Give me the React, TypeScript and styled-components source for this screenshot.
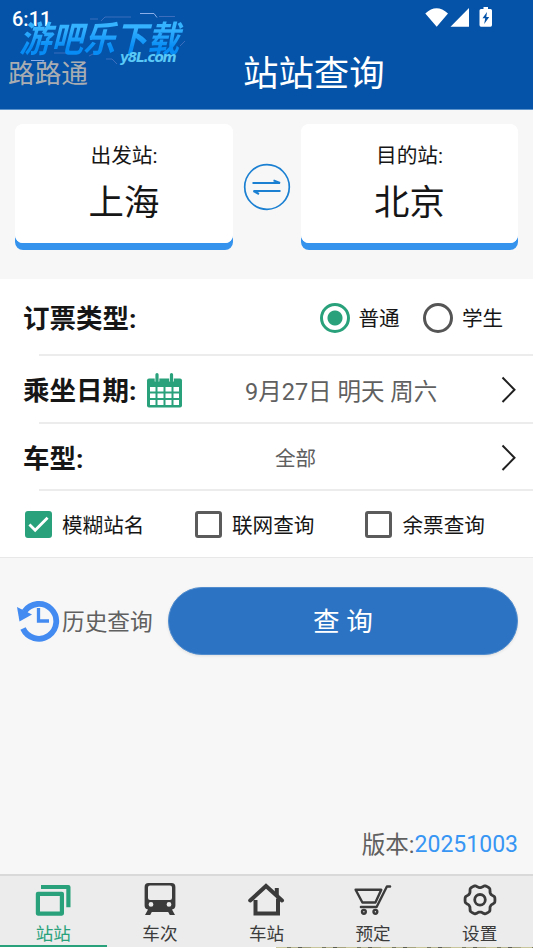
import React from 'react';
import styled, { createGlobalStyle } from 'styled-components';

const GlobalStyle = createGlobalStyle`
  * { box-sizing: border-box; }
  body { margin: 0; background: #f7f7f7; font-family: Roboto, "Noto Sans CJK SC", sans-serif; overflow: hidden; }
  button { font-family: inherit; border: 0; padding: 0; background: none; }
`;

const Screen = styled.div`
  width: 533px;
  height: 948px;
  display: flex;
  flex-direction: column;
  overflow: hidden;
  background: #f7f7f7;
  color: #161616;
`;

const Header = styled.header`
  position: relative;
  height: 110px;
  flex: none;
  background: #0453a8;
  border-bottom: 1px solid #5e94cc;
  color: #fff;
`;

const StatusBar = styled.div`
  display: flex;
  justify-content: space-between;
  height: 36px;
  padding: 7px 40px 0 12px;
`;

const Clock = styled.span`
  font-size: 20px;
  font-weight: 500;
  line-height: 24px;
`;

const StatusIcons = styled.svg`
  width: 70px;
  height: 22px;
`;

const TitleBar = styled.div`
  display: grid;
  grid-template-columns: 232px 1fr;
  height: 73px;
  padding-left: 8px;
`;

const AppName = styled.span`
  font-size: 26.7px;
  line-height: 38px;
  padding-top: 19px;
  color: #a9adb2;
`;

const Title = styled.h1`
  margin: 0;
  padding: 13px 0 0 3px;
  font-size: 35.4px;
  line-height: 50px;
  font-weight: 400;
`;

const Watermark = styled.div`
  position: absolute;
  left: 14px;
  top: 8px;
  width: 174px;
  height: 60px;
`;

const Decoration = styled.svg`
  position: absolute;
  inset: 0;
`;

const Brand = styled.div`
  position: absolute;
  left: 8px;
  top: 10px;
  font-size: 32px;
  line-height: 44px;
  font-weight: 700;
  white-space: nowrap;
  transform: skewX(-14deg) scaleY(1.12);
  background: linear-gradient(#36b3ff 25%, #078cf5 65%);
  background-clip: text;
  color: transparent;
`;

const BrandSite = styled.div`
  position: absolute;
  left: 106px;
  top: 40px;
  font: italic 700 13.5px/18px "DejaVu Sans", sans-serif;
  letter-spacing: -1.1px;
  color: #5ac9f7;
`;

const Stations = styled.section`
  display: grid;
  grid-template-columns: 218px 68px 217px;
  height: 169px;
  flex: none;
  padding: 14px 15px 30px;
`;

const StationCard = styled.button`
  display: flex;
  flex-direction: column;
  align-items: center;
  height: 126px;
  border-radius: 8px;
  background: #fff;
  box-shadow: inset 0 -7px 0 #3693ed;
  overflow: hidden;
  color: #161616;
`;

const StationFace = styled.span`
  display: flex;
  flex-direction: column;
  align-items: center;
  width: 100%;
  height: 119px;
  border-radius: 8px;
  background: #fff;
`;

const StationLabel = styled.span`
  font-size: 20.7px;
  line-height: 30px;
  margin-top: 17px;
`;

const StationName = styled.span`
  font-size: 35.4px;
  line-height: 50px;
  margin-top: 7px;
`;

const SwapButton = styled.button`
  display: flex;
  justify-content: center;
  padding-top: 39px;
`;

const FormPanel = styled.section`
  height: 279px;
  flex: none;
  background: #fff;
  border-bottom: 1px solid #e8e8e8;
`;

const Row = styled.div<{ $height: number }>`
  display: flex;
  align-items: center;
  height: ${(p) => p.$height}px;
  padding-left: 23px;
  background: linear-gradient(#ececec, #ececec) 38.5px 100% / 100% 2px no-repeat;
`;

const RowLabel = styled.span<{ $width: number }>`
  width: ${(p) => p.$width}px;
  padding-top: 2px;
  font-size: 26.5px;
  line-height: 38px;
  font-weight: 700;
  white-space: nowrap;
`;

const RowValue = styled.span<{ $size: number; $indent: number }>`
  flex: 1;
  padding: 3px 0 0 ${(p) => p.$indent}px;
  font-size: ${(p) => p.$size}px;
  line-height: 34px;
  color: #606060;
  white-space: nowrap;
`;

const Chevron = styled.svg`
  width: 18px;
  height: 28px;
  margin-right: 15.5px;
  flex: none;
`;

const RadioOption = styled.label<{ $width: number }>`
  display: flex;
  align-items: center;
  gap: 9px;
  width: ${(p) => p.$width}px;
  font-size: 20.6px;
  line-height: 30px;
  white-space: nowrap;
`;

const OptionText = styled.span`
  padding-top: 3px;
`;

const RadioMark = styled.span<{ $on?: boolean }>`
  width: 30px;
  height: 30px;
  flex: none;
  border: 3px solid ${(p) => (p.$on ? '#29a17b' : '#555')};
  border-radius: 50%;
  background: ${(p) => (p.$on ? 'radial-gradient(circle, #29a17b 7px, transparent 8px)' : 'none')};
`;

const Checks = styled.div`
  display: grid;
  grid-template-columns: 170px 170.5px 1fr;
  align-items: center;
  height: 66px;
  padding: 1px 0 0 24.5px;
`;

const CheckOption = styled.label`
  display: flex;
  align-items: center;
  gap: 10.5px;
  font-size: 20.6px;
  line-height: 30px;
  white-space: nowrap;
`;

const CheckMark = styled.span<{ $on?: boolean }>`
  display: flex;
  width: 27px;
  height: 27px;
  flex: none;
  border: 3px solid ${(p) => (p.$on ? '#29a17b' : '#5b5b5b')};
  border-radius: 3px;
  background: ${(p) => (p.$on ? '#29a17b' : 'transparent')};
`;

const Actions = styled.section`
  display: flex;
  align-items: center;
  height: 128px;
  flex: none;
  padding: 0 15px 2px 16px;
`;

const HistoryButton = styled.button`
  display: flex;
  align-items: center;
  width: 152px;
  gap: 2px;
  font-size: 22.7px;
  line-height: 34px;
  white-space: nowrap;
  color: #606060;
`;

const HistoryText = styled.span`
  padding-top: 4px;
`;

const QueryButton = styled.button`
  width: 350px;
  height: 68px;
  padding-top: 2px;
  border-radius: 34px;
  background: #2c73c3;
  border: 1px solid #518dce;
  box-shadow: 0 1px 3px rgba(0, 0, 0, 0.1);
  color: #fff;
  font-size: 26.6px;
  line-height: 38px;
`;

const Version = styled.div`
  flex: 1;
  display: flex;
  align-items: flex-end;
  justify-content: flex-end;
  padding: 0 15px 11px 0;
  font-size: 23.6px;
  line-height: 36px;
  color: #606060;
`;

const VersionNumber = styled.span`
  font-size: 23px;
  color: #3795f4;
`;

const NavBar = styled.nav`
  display: grid;
  grid-template-columns: repeat(5, 1fr);
  height: 73px;
  flex: none;
  border-top: 2px solid #d9d9d9;
  background: #ececec;
`;

const NavItem = styled.button<{ $active?: boolean }>`
  display: flex;
  flex-direction: column;
  align-items: center;
  padding-top: 5px;
  box-shadow: ${(p) => (p.$active ? 'inset 0 -2px 0 #29a17b' : 'none')};
  color: ${(p) => (p.$active ? '#29a17b' : '#3b3b3b')};
  font-size: 17.6px;
  line-height: 26px;
`;

const NavIcon = styled.svg`
  width: 40px;
  height: 38px;
  flex: none;
`;

const NavText = styled.span`
  margin-top: 2px;
`;

const BottomEdge = styled.div`
  display: grid;
  grid-template-columns: 107px 169px 1fr;
  height: 1px;
  flex: none;
`;

const EdgePlain = styled.span`
  background: #fff;
`;

const EdgeTextured = styled.span`
  background: repeating-linear-gradient(
    90deg,
    #c9c69c 0 11px,
    #77775e 11px 15px,
    #b9b790 15px 22px,
    #5d5e4d 22px 26px,
    #a5a47f 26px 35px
  );
`;

const gearPath =
  Array.from({ length: 120 }, (_, i) => {
    const angle = (i / 120) * Math.PI * 2;
    const wave = Math.max(-1, Math.min(1, 1.5 * Math.cos(6 * angle) + 0.35));
    const radius = 13.6 + 1.35 * wave;
    const x = 20 + radius * Math.cos(angle);
    const y = 18.8 + radius * Math.sin(angle);
    return `${i ? 'L' : 'M'}${x.toFixed(2)} ${y.toFixed(2)}`;
  }).join('') + 'Z';

const navItems: { label: string; icon: React.ReactNode }[] = [
  {
    label: '站站',
    icon: (
      <g fill="none" stroke="currentColor" strokeWidth="4.2" strokeLinejoin="round">
        <rect x="4.9" y="12.8" width="24" height="19.8" />
        <path d="M8 6H35.400V26.200" />
      </g>
    ),
  },
  {
    label: '车次',
    icon: (
      <path
        fill="currentColor"
        fillRule="evenodd"
        d="M8.5 2h23a4 4 0 0 1 3.900 4v18.500a4 4 0 0 1-3.400 4L35 34h-5.200l-1.600-3H11.800l-1.600 3H5l3-5.500a4 4 0 0 1-3.400-4V6a4 4 0 0 1 3.900-4ZM10 4.500a2 2 0 0 0-2 2V17a2 2 0 0 0 2 2h20a2 2 0 0 0 2-2V6.500a2 2 0 0 0-2-2ZM11 21a2.400 2.400 0 1 0 0 4.800 2.400 2.400 0 0 0 0-4.800Zm18 0a2.400 2.400 0 1 0 0 4.800 2.400 2.400 0 0 0 0-4.800Z"
      />
    ),
  },
  {
    label: '车站',
    icon: (
      <g fill="none" stroke="currentColor" strokeWidth="4">
        <path d="M4.200 19.500 20 5 36 19.500" strokeLinecap="round" />
        <path d="M9.500 19V32.500h22.500V17.500" />
        <path d="M30.800 7v8" />
      </g>
    ),
  },
  {
    label: '预定',
    icon: (
      <g
        fill="none"
        stroke="currentColor"
        strokeWidth="2.4"
        strokeLinejoin="round"
        strokeLinecap="round"
        transform="translate(-1.900 1)"
      >
        <path d="M39 4.500h-3.200L25.500 25H9.800M30.200 7.800H4.500L11.300 20.500H24.300Z" />
        <circle cx="12.800" cy="29.800" r="1.900" />
        <circle cx="24.300" cy="29.800" r="1.900" />
      </g>
    ),
  },
  {
    label: '设置',
    icon: (
      <g fill="none" stroke="currentColor" strokeWidth="2.800" strokeLinejoin="round">
        <path d={gearPath} />
        <circle cx="20" cy="18.800" r="5.300" />
      </g>
    ),
  },
];

function ArrowRight() {
  return (
    <Chevron viewBox="0 0 18 28">
      <path d="M2.500 1.500 14.500 13.700 2.500 26" fill="none" stroke="#202020" strokeWidth="2" />
    </Chevron>
  );
}

function Station({ label, name }: { label: string; name: string }) {
  return (
    <StationCard>
      <StationFace>
        <StationLabel>{label}</StationLabel>
        <StationName>{name}</StationName>
      </StationFace>
    </StationCard>
  );
}

export default function App() {
  return (
    <Screen>
      <GlobalStyle />
      <Header>
        <StatusBar>
          <Clock>6:11</Clock>
          <StatusIcons viewBox="0 0 70 22" fill="#fff">
            <path d="M2.300 6.500Q13.500-4 25 6.500L13.700 19.700ZM27.500 19.700 46 1V19.700Z" />
            <path
              fillRule="evenodd"
              d="M60.500 0h4.500v2h2.500q1.500 0 1.500 1.500V18q0 1.700-1.500 1.700h-9.500q-1.500 0-1.500-1.700V3.500Q56.500 2 58 2h2.500ZM64 5l-4.500 6.300h2.700L61.200 17l5-7h-2.900Z"
            />
          </StatusIcons>
        </StatusBar>
        <TitleBar>
          <AppName>路路通</AppName>
          <Title>站站查询</Title>
        </TitleBar>
        <Watermark>
          <Decoration viewBox="0 0 174 60" fill="none">
            <path d="M126 5.500h14l3 4M17 52.500h13l-4 4" stroke="#8baee8" />
            <path
              d="M87 13l4-4h26M145 8.500h16M76 11h8M40 45h12M92 51h6l5 5M166 38l5-5M75 48l8-4"
              stroke="#5679c5"
              strokeWidth=".7"
            />
          </Decoration>
          <Brand>游吧乐下载</Brand>
          <BrandSite>y8L.com</BrandSite>
        </Watermark>
      </Header>

      <Stations>
        <Station label="出发站:" name="上海" />
        <SwapButton aria-label="交换">
          <svg width="48" height="48" viewBox="0 0 48 48" fill="none" stroke="#1b80d2">
            <circle cx="24" cy="24" r="22.300" strokeWidth="1.700" />
            <path d="M9.500 20H37L30.500 17.300M37.500 28H10.500L16 31" strokeWidth="2" />
          </svg>
        </SwapButton>
        <Station label="目的站:" name="北京" />
      </Stations>

      <FormPanel>
        <Row $height={77}>
          <RowLabel $width={296.5}>订票类型:</RowLabel>
          <RadioOption $width={103.5}>
            <RadioMark $on />
            <OptionText>普通</OptionText>
          </RadioOption>
          <RadioOption $width={90}>
            <RadioMark />
            <OptionText>学生</OptionText>
          </RadioOption>
        </Row>
        <Row $height={68}>
          <RowLabel $width={123}>乘坐日期:</RowLabel>
          <svg width="37" height="36" viewBox="0 0 37 36">
            <rect x="1" y="6.500" width="35" height="29" rx="2" fill="#29a17b" />
            <path d="M11 1v8.500M25.500 1v8.500" stroke="#fff" strokeWidth="4.600" />
            <path d="M11 2.500v6.500M25.500 2.500v6.500" stroke="#29a17b" strokeWidth="3.200" strokeLinecap="round" />
            <path
              fill="#fff"
              d="M4 15h5.500v4.500H4zm7.500 0h6v4.500h-6zm8 0h6v4.500h-6zm8 0H33v4.500h-5.500zM4 21.500h5.500v4.500H4zm7.500 0h6v4.500h-6zm8 0h6v4.500h-6zm8 0H33v4.500h-5.500zM4 28h5.500v5H4zm7.500 0h6v5h-6zm8 0h6v5h-6zm8 0H33v5h-5.500z"
            />
          </svg>
          <RowValue $size={23.5} $indent={62}>9月27日 明天 周六</RowValue>
          <ArrowRight />
        </Row>
        <Row $height={67}>
          <RowLabel $width={160}>车型:</RowLabel>
          <RowValue $size={20.6} $indent={92}>全部</RowValue>
          <ArrowRight />
        </Row>
        <Checks>
          <CheckOption>
            <CheckMark $on>
              <svg width="21" height="21" viewBox="0 0 22 22">
                <path d="M1.500 11 7.500 17 20.500 4" fill="none" stroke="#fff" strokeWidth="3" />
              </svg>
            </CheckMark>
            <OptionText>模糊站名</OptionText>
          </CheckOption>
          <CheckOption>
            <CheckMark />
            <OptionText>联网查询</OptionText>
          </CheckOption>
          <CheckOption>
            <CheckMark />
            <OptionText>余票查询</OptionText>
          </CheckOption>
        </Checks>
      </FormPanel>

      <Actions>
        <HistoryButton>
          <svg width="44" height="44" viewBox="0 0 44 44" fill="none">
            <path d="M8.500 12.500A17.400 17.400 0 1 1 7 29.500" stroke="#438bf1" strokeWidth="5.800" />
            <path d="M1 8 16 15.500 3.500 22.500Z" fill="#438bf1" />
            <path d="M22.500 9V22H33" stroke="#438bf1" strokeWidth="3.300" />
          </svg>
          <HistoryText>历史查询</HistoryText>
        </HistoryButton>
        <QueryButton>查 询</QueryButton>
      </Actions>

      <Version>
        版本:<VersionNumber>20251003</VersionNumber>
      </Version>

      <NavBar>
        {navItems.map((item, i) => (
          <NavItem key={item.label} $active={i === 0}>
            <NavIcon viewBox="0 0 40 38">{item.icon}</NavIcon>
            <NavText>{item.label}</NavText>
          </NavItem>
        ))}
      </NavBar>
      <BottomEdge>
        <EdgePlain />
        <EdgePlain />
        <EdgeTextured />
      </BottomEdge>
    </Screen>
  );
}
